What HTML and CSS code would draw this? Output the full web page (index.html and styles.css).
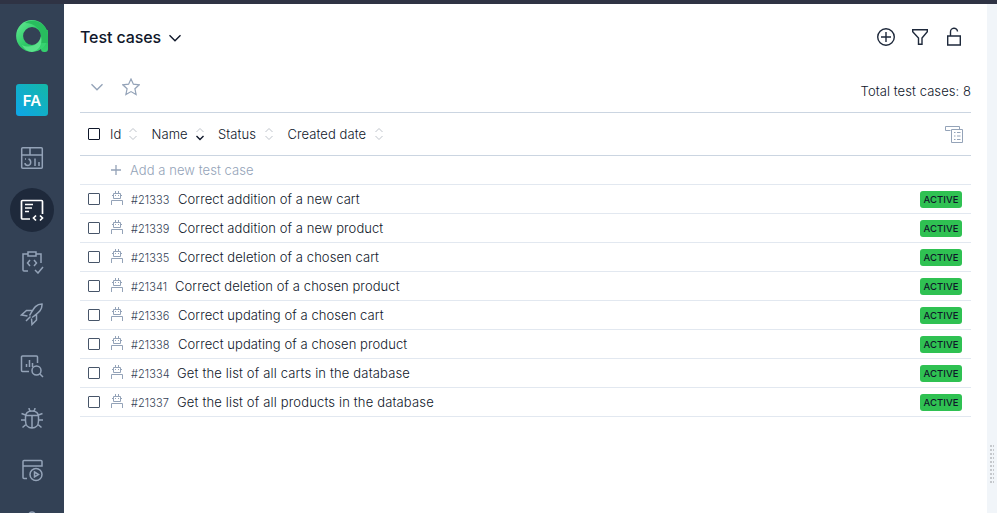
FILE: index.html
```html
<!DOCTYPE html>
<html lang="en">
<head>
<meta charset="utf-8">
<title>Test cases</title>
<link rel="stylesheet" href="styles.css">
</head>
<body>
<svg width="0" height="0" class="defs">
  <defs>
    <linearGradient id="g1" x1="0" y1="0" x2="1" y2="1"><stop offset="0" stop-color="#5be58c"/><stop offset=".55" stop-color="#2cc765"/><stop offset="1" stop-color="#3ad673"/></linearGradient>
    <linearGradient id="g2" x1="0" y1="0" x2="0" y2="1"><stop offset="0" stop-color="#25b95a"/><stop offset="1" stop-color="#34d06e"/></linearGradient>
    <symbol id="robot" viewBox="0 0 14 15"><path d="M5.500 1v3M8.500 1v3M3.500 3.500h7v5h-7zM2 5.500h1.500M10.500 5.500H12M1.500 15v-4.500h11V15"/><path d="M5 5.500h1M8 5.500h1"/></symbol>
    <symbol id="sort-up" viewBox="0 0 10 7"><path d="M1.500 5 5 1.500 8.500 5"/></symbol>
    <symbol id="sort-down" viewBox="0 0 10 7"><path d="M1.500 2 5 5.500 8.500 2"/></symbol>
  </defs>
</svg>
<div class="topbar"></div>
<div class="app">
  <nav class="sidebar">
    <svg class="logo" viewBox="0 0 32 32"><path d="M25 10h7v19a3 3 0 0 1-3 3h-1a3 3 0 0 1-3-3z" fill="url(#g2)"/><circle cx="16" cy="16" r="12.400" fill="none" stroke="url(#g1)" stroke-width="7"/><path d="M9 3C17-3 32 3 32 17v6h-7v-7C25 9 18 3 9 3z" fill="#28bd5e"/><path d="M6 25c8 4 17 0 19-9 2 8-2 15-9 16-4 0-8-3-10-7z" fill="#75efa0" opacity=".6"/></svg>
    <div class="project">FA</div>
    <a class="nav"><svg viewBox="0 0 24 24"><rect x="1.700" y="1.700" width="20.600" height="20.600" rx="1"/><path d="M2 9h20M10 2v7M5 13h1M8.500 13c3 1 3 6-.5 6.500-1.500 0-3-.7-3-2.500M15 12.500v7.500M19 16v4"/></svg></a>
    <a class="nav active"><svg viewBox="0 0 24 24"><path d="M10 21H2.500a1 1 0 0 1-1-1V3.500a1 1 0 0 1 1-1h19a1 1 0 0 1 1 1V16M5 6.500h8M5 10h7M5 13.500h4M16 17.500 13.500 20l2.500 2.500M20 17.500l2.500 2.500-2.500 2.500"/></svg></a>
    <a class="nav"><svg viewBox="0 0 24 24"><path d="M8 21H4a1 1 0 0 1-1-1V4h5M16 4h5v9M8 2h8v4H8zM10 10l-2.500 3 2.500 3M14 10l2.500 3-2.500 3M15 20l3 3 5-6"/></svg></a>
    <a class="nav"><svg viewBox="0 0 24 24"><path d="M9.500 13.500C13 8 15 2 22 2c.5 7-5 9.500-10 13.500M12.500 8.500H6.500L1.500 13l6 1M16.500 12v6L12 22.500l-.5-6M10.500 14.500 6 19"/></svg></a>
    <a class="nav"><svg viewBox="0 0 24 24"><path d="M9 17.500H2.500a1 1 0 0 1-1-1V3a1 1 0 0 1 1-1h14a1 1 0 0 1 1 1v6M6.500 10v3M9.500 6v7M12.500 9v4"/><circle cx="16.500" cy="16.500" r="4.500"/><path d="m20 20 3 3"/></svg></a>
    <a class="nav"><svg viewBox="0 0 24 24"><path d="M5.500 11C5.500 7 8 5 12 5s6.500 2 6.500 6v4c0 4-2.500 7-6.500 7s-6.500-3-6.500-7zM5.500 9.500h13M12 9.500V22M9 2c0 2 .5 2.500 1.500 3M15 2c0 2-.5 2.500-1.500 3M1.500 7.500 5.500 9M22.500 7.500 18.500 9M1 14h4.500M18.500 14H23M2.500 21.500 6.500 18M21.500 21.500 17.500 18"/></svg></a>
    <a class="nav"><svg viewBox="0 0 24 24"><path d="M7 20.500H4a1 1 0 0 1-1-1V3.500a1 1 0 0 1 1-1h17a1 1 0 0 1 1 1V8H3"/><circle cx="16" cy="16.500" r="6"/><path d="m14.500 14 4 2.500-4 2.500z"/></svg></a>
    <a class="nav"><svg viewBox="0 0 24 24"><circle cx="12" cy="5" r="3"/></svg></a>
  </nav>
  <main class="content">
    <header class="title-row">
      <h1>Test cases</h1>
      <svg class="chevron" viewBox="0 0 14 8"><path d="m1.500 1.200 5.500 5.500 5.500-5.500"/></svg>
      <div class="actions">
        <svg viewBox="0 0 20 20"><circle cx="10" cy="10" r="8.300"/><path d="M10 5v10M5 10h10"/></svg>
        <svg viewBox="0 0 20 20"><path d="M2.700 2.700h14.600v2L12 11v6.300H8.500V11L2.700 4.700z"/></svg>
        <svg viewBox="0 0 20 20"><path d="M3.700 9h12.600v9H3.700zM6.500 9V5a3.500 3.500 0 0 1 7-.5"/></svg>
      </div>
    </header>
    <div class="tools">
      <svg class="chevron" viewBox="0 0 14 8"><path d="m1.500 1.200 5.500 5.500 5.500-5.500"/></svg>
      <svg class="star" viewBox="0 0 18 18"><path d="m9 1 2.400 5.200 5.800.6-4.300 3.900 1.200 5.800L9 13.600l-5.100 2.900 1.200-5.800L.8 6.800l5.800-.6z"/></svg>
      <span class="total">Total test cases: 8</span>
    </div>
    <div class="head">
      <i class="box"></i>
      <span class="c-id">Id</span><span class="sort"><svg><use href="#sort-up"/></svg><svg><use href="#sort-down"/></svg></span>
      <span class="c-name">Name</span><span class="sort sorted"><svg><use href="#sort-up"/></svg><svg><use href="#sort-down"/></svg></span>
      <span class="c-status">Status</span><span class="sort"><svg><use href="#sort-up"/></svg><svg><use href="#sort-down"/></svg></span>
      <span class="c-date">Created date</span><span class="sort"><svg><use href="#sort-up"/></svg><svg><use href="#sort-down"/></svg></span>
      <svg class="columns" viewBox="0 0 18 18"><path d="M5.500 5.500h-5v-4h14v3M6.500 4.500h11v13h-11zM9 7.500h1.500M12 7.500h3.500M9 11h1.500M12 11h3.500M9 14.500h1.500M12 14.500h3.500"/></svg>
    </div>
    <div class="add"><svg viewBox="0 0 12 12"><path d="M6 1v10M1 6h10"/></svg><span>Add a new test case</span></div>
    <div class="row"><i class="box"></i><svg class="robot"><use href="#robot"/></svg><span class="id">#21333</span><span class="name">Correct addition of a new cart</span><b class="badge">ACTIVE</b></div>
    <div class="row"><i class="box"></i><svg class="robot"><use href="#robot"/></svg><span class="id">#21339</span><span class="name">Correct addition of a new product</span><b class="badge">ACTIVE</b></div>
    <div class="row"><i class="box"></i><svg class="robot"><use href="#robot"/></svg><span class="id">#21335</span><span class="name">Correct deletion of a chosen cart</span><b class="badge">ACTIVE</b></div>
    <div class="row"><i class="box"></i><svg class="robot"><use href="#robot"/></svg><span class="id narrow">#21341</span><span class="name">Correct deletion of a chosen product</span><b class="badge">ACTIVE</b></div>
    <div class="row"><i class="box"></i><svg class="robot"><use href="#robot"/></svg><span class="id">#21336</span><span class="name">Correct updating of a chosen cart</span><b class="badge">ACTIVE</b></div>
    <div class="row"><i class="box"></i><svg class="robot"><use href="#robot"/></svg><span class="id">#21338</span><span class="name">Correct updating of a chosen product</span><b class="badge">ACTIVE</b></div>
    <div class="row"><i class="box"></i><svg class="robot"><use href="#robot"/></svg><span class="id">#21334</span><span class="name wide">Get the list of all carts in the database</span><b class="badge">ACTIVE</b></div>
    <div class="row"><i class="box"></i><svg class="robot"><use href="#robot"/></svg><span class="id">#21337</span><span class="name wide">Get the list of all products in the database</span><b class="badge">ACTIVE</b></div>
  </main>
  <aside class="resizer"><div class="grip"></div></aside>
</div>
</body>
</html>
```
FILE: styles.css
```css
* { box-sizing: border-box; }
body { margin: 0; height: 513px; overflow: hidden; background: #fff; color: #0f172a; font: 300 13px/20px Inter, "Liberation Sans", sans-serif; letter-spacing: .07px; }
svg { fill: none; stroke: currentColor; flex: none; display: block; }
.defs { position: absolute; }
.topbar { height: 4px; background: #2f3344; }
.app { display: flex; height: 509px; }
.sidebar { width: 64px; flex: none; background: #334155; display: flex; flex-direction: column; align-items: center; padding-top: 16px; overflow: hidden; }
.logo { width: 32px; height: 32px; stroke: none; }
.project { width: 32px; height: 32px; flex: none; margin: 32px 0 20px; border-radius: 3px; background: linear-gradient(45deg, #0ea5e9, #14b8a6); color: #fff; font: 600 15px/33px Inter, sans-serif; text-align: center; }
.nav { width: 44px; height: 44px; flex: none; margin-bottom: 8px; border-radius: 50%; display: flex; align-items: center; justify-content: center; color: #94a3b8; }
.nav svg { width: 24px; height: 24px; stroke-width: 1.5; }
.nav.active { background: #1e293b; color: #fff; }
.nav.active svg { stroke-width: 1.7; }
.content { flex: 1; padding: 0 16px; }
.title-row { display: flex; align-items: center; height: 66px; }
h1 { margin: 0; width: 88px; font: 550 16px/24px Inter, sans-serif; letter-spacing: -.1px; white-space: nowrap; }
.chevron { width: 14px; height: 8px; stroke-width: 1.4; margin-top: 2px; }
.actions { margin-left: auto; display: flex; gap: 14px; padding-right: 7px; }
.actions svg { width: 20px; height: 20px; stroke-width: 1.4; color: #1e293b; }
.tools { display: flex; align-items: center; height: 43px; border-bottom: 1px solid #cbd5e1; padding-left: 10px; color: #94a3b8; }
.tools .chevron { margin-top: -8px; }
.star { width: 18px; height: 18px; margin: -9px 0 0 18px; stroke-width: 1.2; }
.total { margin-left: auto; color: #0f172a; }
.head { display: flex; align-items: center; height: 43px; border-bottom: 1px solid #cbd5e1; padding-left: 8px; }
.box { width: 12px; height: 12px; flex: none; border: 1px solid #475569; border-radius: 1px; }
.head .box { border-color: #0f172a; margin-right: 10px; }
.c-id { width: 18px; }
.c-name { width: 43px; }
.c-status { width: 46px; }
.c-date { width: 86px; }
.head span { white-space: nowrap; }
.sort { width: 10px; height: 14px; margin-right: 13.500px; color: #bfc4cb; }
.sort svg { width: 10px; height: 7px; }
.sorted svg:last-child { color: #0f172a; stroke-width: 1.4; }
.columns { width: 18px; height: 18px; margin: 0 8px 0 auto; color: #94a3b8; }
.add { display: flex; align-items: center; height: 29px; border-bottom: 1px solid #e2e8f0; padding-left: 30px; gap: 8px; color: #94a3b8; }
.add svg { width: 12px; height: 12px; stroke-width: 1.3; }
.row { display: flex; align-items: center; height: 29px; border-bottom: 1px solid #e2e8f0; padding: 0 9px 0 8px; }
.robot { width: 14px; height: 15px; margin: -3px 7px 0 10px; color: #94a3b8; }
.id { width: 47px; font-size: 11px; color: #334155; padding-top: 1px; }
.id.narrow { width: 44px; }
.name { white-space: nowrap; }
.name.wide { letter-spacing: .16px; margin-left: -1px; }
.badge { margin-left: auto; width: 42px; height: 17px; border-radius: 3px; background: #2fc152; font: 500 9.500px/17px Inter, sans-serif; text-align: center; }
.resizer { width: 10px; background: #f1f5f9; padding: 441px 0 0 3px; }
.grip { width: 4px; height: 38px; background: repeating-linear-gradient(to bottom, transparent 0 2px, #f1f5f9 2px 4px), linear-gradient(to right, #c5c8cc 0 2px, #f1f5f9 2px 3px, #c5c8cc 3px); }
```
